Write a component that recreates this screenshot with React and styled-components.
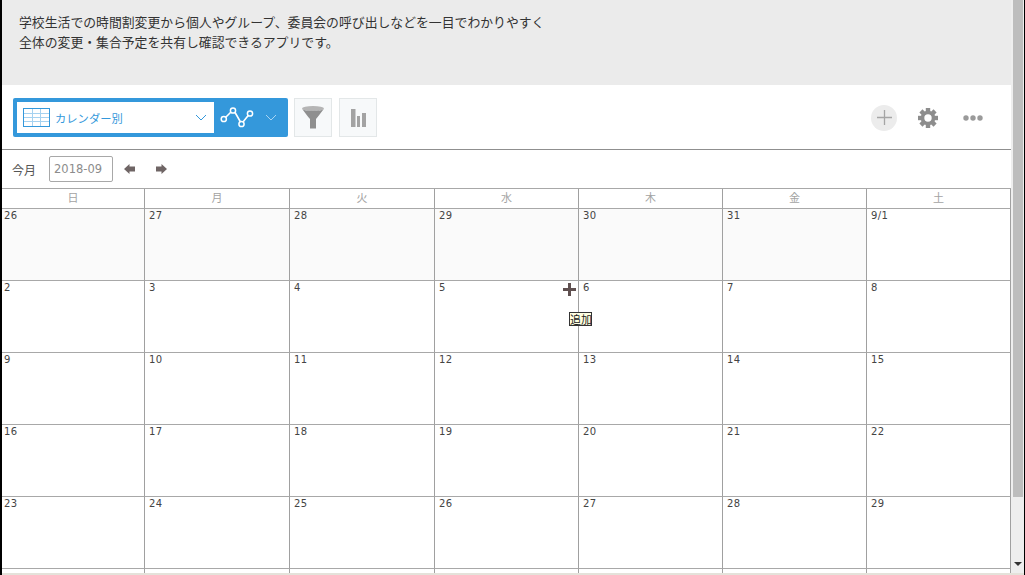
import React from "react";
import styled, { createGlobalStyle } from "styled-components";

const WEEKDAYS = ["日", "月", "火", "水", "木", "金", "土"];
const DAYS = [
	["26", "27", "28", "29", "30", "31", "9/1"],
	["2", "3", "4", "5", "6", "7", "8"],
	["9", "10", "11", "12", "13", "14", "15"],
	["16", "17", "18", "19", "20", "21", "22"],
	["23", "24", "25", "26", "27", "28", "29"],
];

const GlobalStyle = createGlobalStyle`
	html, body {
		margin: 0;
		padding: 0;
		height: 575px;
		overflow: hidden;
		background: #000;
	}
	* {
		box-sizing: border-box;
	}
`;

const TableIcon = () => (
	<svg width="27" height="19" viewBox="0 0 27 19">
		<rect x="0.5" y="0.5" width="26" height="18" fill="#fff" stroke="#3498db" />
		<path d="M1 5.5h25M1 9.5h25M1 13.5h25M9.5 1v17M17.5 1v17" stroke="#a6d2f0" fill="none" />
	</svg>
);

const Chevron = ({ color }) => (
	<svg width="12" height="7" viewBox="0 0 12 7">
		<path d="M1 1l5 5 5-5" stroke={color} strokeWidth="1" fill="none" />
	</svg>
);

const GraphIcon = () => (
	<svg width="34" height="22" viewBox="0 0 34 22">
		<path d="M4 12L12 4M14.5 4.5L20.5 15M23 15L29 7.5" stroke="#fff" strokeWidth="1.6" fill="none" />
		<circle cx="3.8" cy="12" r="2.6" fill="#3498db" stroke="#fff" strokeWidth="1.5" />
		<circle cx="13" cy="3.5" r="2.6" fill="#3498db" stroke="#fff" strokeWidth="1.5" />
		<circle cx="21.5" cy="17" r="2.6" fill="#3498db" stroke="#fff" strokeWidth="1.5" />
		<circle cx="30" cy="6.5" r="2.6" fill="#3498db" stroke="#fff" strokeWidth="1.5" />
	</svg>
);

const FunnelIcon = () => (
	<svg width="24" height="23" viewBox="0 0 24 23">
		<ellipse cx="12" cy="2.5" rx="11" ry="2.5" fill="#b5b5b5" />
		<path d="M1 3c2 2 3 4 8 10v9.500h6V13c5-6 6-8 8-10-3 2.500-19 2.500-22 0z" fill="#8f8f8f" />
	</svg>
);

const BarsIcon = () => (
	<svg width="15" height="18" viewBox="0 0 15 18">
		<path d="M0 0h4.500v18H0zM6 7h3v11H6zM11 4h4v14h-4z" fill="#a3a3a3" />
	</svg>
);

const PlusIcon = () => (
	<svg width="15" height="15" viewBox="0 0 15 15">
		<path d="M7.500 0v15M0 7.500h15" stroke="#a5a5a5" strokeWidth="1.300" fill="none" />
	</svg>
);

const GearIcon = () => (
	<svg width="20" height="20" viewBox="0 0 20 20">
		<circle cx="10" cy="10" r="5.500" fill="none" stroke="#8d8d8d" strokeWidth="3.600" />
		{[0, 45, 90, 135, 180, 225, 270, 315].map(function(angle) {
			return <rect key={angle} x="7.800" y="0" width="4.400" height="4.500" fill="#8d8d8d" transform={`rotate(${angle} 10 10)`} />;
		})}
	</svg>
);

const DotsIcon = () => (
	<svg width="20" height="6" viewBox="0 0 20 6">
		<circle cx="3" cy="3" r="2.700" fill="#9a9a9a" />
		<circle cx="10" cy="3" r="2.700" fill="#9a9a9a" />
		<circle cx="17" cy="3" r="2.700" fill="#9a9a9a" />
	</svg>
);

const ArrowIcon = ({ left }) => (
	<svg width="11" height="10" viewBox="0 0 11 10" style={{ transform: left ? "scaleX(-1)" : undefined }}>
		<path d="M0 2.500h5.500V0L11 5 5.500 10V7.500H0z" fill="#6f6565" />
	</svg>
);

const BigPlus = () => (
	<svg width="13" height="13" viewBox="0 0 13 13">
		<path d="M5 0h3v5h5v3H8v5H5V8H0V5h5z" fill="#5f5050" />
	</svg>
);

export default function App() {
	return (
		<>
			<GlobalStyle />
			<Page>
				<Main>
					<Description>
						<p>学校生活での時間割変更から個人やグループ、委員会の呼び出しなどを一目でわかりやすく</p>
						<p>全体の変更・集合予定を共有し確認できるアプリです。</p>
					</Description>
					<Toolbar>
						<ViewPicker>
							<ViewSelect>
								<TableIcon />
								<ViewName>カレンダー別</ViewName>
								<Chevron color="#3498db" />
							</ViewSelect>
							<GraphSelect>
								<GraphIcon />
								<Chevron color="#a9d4f2" />
							</GraphSelect>
						</ViewPicker>
						<ToolButton><FunnelIcon /></ToolButton>
						<ToolButton $gap={7}><BarsIcon /></ToolButton>
						<ToolbarRight>
							<AddCircle><PlusIcon /></AddCircle>
							<GearIcon />
							<DotsSlot><DotsIcon /></DotsSlot>
						</ToolbarRight>
					</Toolbar>
					<MonthBar>
						<TodayLabel>今月</TodayLabel>
						<MonthInput>2018-09</MonthInput>
						<NavArrow><ArrowIcon left /></NavArrow>
						<NavArrow><ArrowIcon /></NavArrow>
					</MonthBar>
					<Calendar>
						{WEEKDAYS.map((day) => <HeadCell key={day}>{day}</HeadCell>)}
						{DAYS.map((week, row) => week.map((day, col) => (
							<DayCell key={row + "-" + col} $muted={row === 0 && col < 6} $first={col === 0}>
								{day}
								{row === 1 && col === 3 && (
									<AddButton>
										<BigPlus />
										<Tooltip>追加</Tooltip>
									</AddButton>
								)}
							</DayCell>
						)))}
						{WEEKDAYS.map((day) => <NextRowCell key={day} />)}
					</Calendar>
				</Main>
				<Scrollbar>
					<ScrollThumb />
					<ScrollDown />
				</Scrollbar>
				<BottomEdge />
			</Page>
		</>
	);
}

const Page = styled.div`
	position: relative;
	display: flex;
	width: 1022px;
	height: 575px;
	margin-left: 2px;
	background: #fff;
	overflow: hidden;
	font-family: "DejaVu Sans", "Noto Sans CJK JP", sans-serif;
`;

const Main = styled.div`
	width: 1009px;
	flex: none;
	display: flex;
	flex-direction: column;
`;

const Description = styled.div`
	height: 85px;
	flex: none;
	padding: 12px 17px 0;
	background: #ebebeb;
	color: #333;
	font-family: "Noto Sans CJK JP", sans-serif;
	font-size: 12.85px;
	line-height: 20px;

	p {
		margin: 0;
	}
`;

const Toolbar = styled.div`
	height: 65px;
	flex: none;
	display: flex;
	align-items: flex-start;
	padding: 13px 0 0 11px;
	border-bottom: 1px solid #8f8f8f;
`;

const ViewPicker = styled.div`
	width: 275px;
	height: 39px;
	display: flex;
	padding: 4px;
	border-radius: 2px;
	background: #3498db;
`;

const ViewSelect = styled.div`
	width: 197px;
	height: 31px;
	display: flex;
	align-items: center;
	padding: 0 7px 0 6px;
	background: #fff;
`;

const ViewName = styled.span`
	flex: 1;
	margin-left: 5px;
	color: #3498db;
	font-family: "Noto Sans CJK JP", sans-serif;
	font-size: 11.300px;
`;

const GraphSelect = styled.div`
	flex: 1;
	display: flex;
	align-items: center;
	justify-content: space-between;
	padding: 0 7px 0 6px;
`;

const ToolButton = styled.div`
	width: 38px;
	height: 39px;
	display: flex;
	align-items: center;
	justify-content: center;
	margin-left: ${(props) => props.$gap || 6}px;
	background: #f7f9fa;
	border: 1px solid #e3e7e8;
`;

const ToolbarRight = styled.div`
	margin-left: auto;
	height: 39px;
	display: flex;
	align-items: center;
	gap: 21px;
	padding-right: 28px;
`;

const AddCircle = styled.div`
	width: 26px;
	height: 26px;
	display: flex;
	align-items: center;
	justify-content: center;
	border-radius: 50%;
	background: #ececec;
`;

const DotsSlot = styled.div`
	display: flex;
	margin-left: 4px;
`;

const MonthBar = styled.div`
	height: 38px;
	flex: none;
	display: flex;
	align-items: center;
	padding-left: 10px;
`;

const TodayLabel = styled.span`
	color: #555;
	font-family: "Noto Sans CJK JP", sans-serif;
	font-size: 12px;
	margin-right: 13px;
`;

const MonthInput = styled.div`
	width: 64px;
	height: 26px;
	display: flex;
	align-items: center;
	padding-left: 4px;
	border: 1px solid #a8a8a8;
	border-radius: 2px;
	color: #8c8c8c;
	font-size: 11.500px;
`;

const NavArrow = styled.span`
	display: flex;
	margin-left: 11px;
	margin-right: 10px;
`;

const Calendar = styled.div`
	display: grid;
	grid-template-columns: 143px 145px 145px 144px 144px 144px 144px;
	grid-template-rows: 20px;
	grid-auto-rows: 72px;
	flex: none;
	border-top: 1px solid #a8a8a8;
`;

const HeadCell = styled.div`
	height: 20px;
	text-align: center;
	line-height: 17px;
	color: #a3a3a3;
	font-family: "Noto Sans CJK JP", sans-serif;
	font-size: 11px;
	border-right: 1px solid #a0a0a0;
	border-bottom: 1px solid #a8a8a8;
`;

const DayCell = styled.div`
	position: relative;
	height: 72px;
	padding: 1px 2px 1px ${(props) => (props.$first ? 2 : 4)}px;
	color: #444;
	font-size: 10px;
	letter-spacing: 0.4px;
	line-height: 12px;
	background: ${(props) => (props.$muted ? "#fafafa" : "#fff")};
	border-right: 1px solid #a0a0a0;
	border-bottom: 1px solid #a8a8a8;
`;

const NextRowCell = styled.div`
	border-right: 1px solid #a0a0a0;
`;

const AddButton = styled.div`
	position: absolute;
	top: 2px;
	right: 2px;
	width: 13px;
	height: 13px;
`;

const Tooltip = styled.div`
	position: absolute;
	top: 29px;
	left: 6px;
	z-index: 2;
	width: 23px;
	height: 14px;
	text-align: center;
	line-height: 12px;
	letter-spacing: 0;
	color: #222;
	background: #ffffe1;
	border: 1px solid #333;
	font-family: "Noto Sans CJK JP", sans-serif;
	font-size: 11px;
	white-space: nowrap;
`;

const Scrollbar = styled.div`
	position: relative;
	width: 13px;
	flex: none;
	background: #eeeeee;
`;

const ScrollThumb = styled.div`
	height: 497px;
	width: 10px;
	margin-left: 2px;
	background: #bdbdbd;
`;

const ScrollDown = styled.div`
	position: absolute;
	left: 3px;
	bottom: 9px;
	width: 0;
	height: 0;
	border-left: 4px solid transparent;
	border-right: 4px solid transparent;
	border-top: 4px solid #333;
`;

const BottomEdge = styled.div`
	position: absolute;
	left: 0;
	right: 0;
	bottom: 0;
	height: 2px;
	background: #e4e2da;
`;
